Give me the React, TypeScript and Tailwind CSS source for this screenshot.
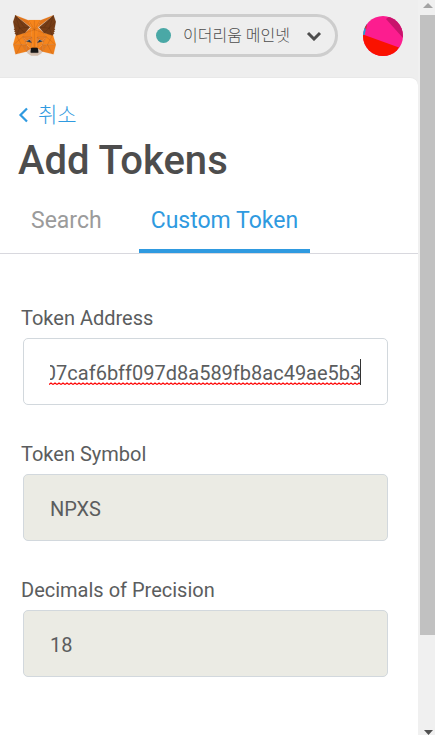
import React, { useEffect, useRef, useState } from "react";

type Facet = [fill: string, points: string];

const FOX_FACETS: Facet[] = [
  ["#e2761b", "274,35 174,109 193,65"],
  ["#e2761b", "44,35 143,110 125,65"],
  ["#ee7f1c", "238,206 205,247 274,264 288,207"],
  ["#ee7f1c", "31,207 45,264 114,247 80,206"],
  ["#f0801c", "103,138 87,162 144,164 142,104"],
  ["#f0801c", "215,138 176,103 174,164 231,162"],
  ["#e4761b", "112,248 140,231 111,208"],
  ["#e4761b", "178,231 206,248 207,208"],
  ["#d7c1b3", "206,247 178,231 181,253 180,262"],
  ["#d7c1b3", "113,247 138,262 138,253 140,231"],
  ["#e67a1a", "112,248 111,207 80,207"],
  ["#e67a1a", "207,207 206,248 238,207"],
  ["#ea7c1e", "231,162 174,164 180,193 188,176 208,185"],
  ["#ea7c1e", "110,185 130,176 139,193 144,164 88,162"],
  ["#e4751f", "88,162 111,208 110,185"],
  ["#e4751f", "208,185 207,208 231,162"],
  ["#e4751f", "144,164 139,193 145,228 147,182"],
  ["#e4751f", "174,164 172,182 173,228 180,193"],
  ["#f6851b", "180,193 173,228 178,231 207,208 208,185"],
  ["#f6851b", "110,185 111,208 140,231 145,228 139,193"],
  ["#f6851b", "270,148 215,138 231,162 207,208 238,207 288,207"],
  ["#f6851b", "103,138 48,148 31,207 80,207 111,208 88,162"],
  ["#f6851b", "174,164 178,107 195,63 123,63 140,107 144,164 145,183 145,228 173,228 173,183"],
  ["#d3bfae", "180,262 181,253 178,251 140,251 138,253 138,262 113,245 118,258 140,272 178,272 201,258 206,245"],
  ["#763d16", "280,114 288,73 274,35 187,105 215,138 267,153 279,140 274,136 282,129 276,124 284,118"],
  ["#763d16", "31,73 39,114 35,118 43,124 37,129 45,136 40,140 51,153 103,138 132,105 44,35"],
  ["#233447", "142,196 110,188 130,178"],
  ["#233447", "177,196 189,178 208,188"],
  ["#161616", "180,229 173,225 145,225 138,229 136,253 140,255 178,255 183,253"],
];

const FoxLogo = () => (
  <svg viewBox="30 33 259 241" preserveAspectRatio="none" className="mt-px h-[41px] w-[43px]" aria-hidden="true">
    {FOX_FACETS.map(([fill, points]) => (
      <polygon key={points} fill={fill} stroke={fill} strokeWidth="1" points={points} />
    ))}
    <g fill="none" stroke="#8a4312" strokeOpacity="0.4" strokeWidth="3">
      <path d="M125 65 159 120 193 65M159 65V225M131 105 159 120 188 105M103 138 159 120 215 138" />
      <path d="M103 138 88 162 111 208 80 207 50 263M88 162 34 207H80L51 153M80 207 112 247M111 208 112 247" />
      <path d="M215 138 231 162 207 208 238 207 268 263M231 162 285 207H238L267 153M238 207 206 247M207 208 206 247" />
      <path d="M88 162 144 164 139 225M231 162 174 164 180 225M110 185 144 164M208 185 174 164" />
    </g>
    <g fill="none" stroke="#4d260c" strokeOpacity="0.6" strokeWidth="3">
      <path d="M44 35 70 110 131 105M32 73 70 110 51 153M70 110 103 138M44 35 100 105" />
      <path d="M274 35 248 110 188 105M287 73 248 110 267 153M248 110 215 138M274 35 218 105" />
    </g>
  </svg>
);

const AccountAvatar = () => (
  <svg viewBox="0 0 40 40" className="size-10" aria-hidden="true">
    <defs>
      <clipPath id="avatar-clip">
        <circle cx="20" cy="20" r="20" />
      </clipPath>
    </defs>
    <g clipPath="url(#avatar-clip)">
      <rect width="40" height="40" fill="#fc1d8f" />
      <path d="M23 3 27 0H40V22Z" fill="#c8146c" />
      <path d="M0 18.500 36 31.500 30 40H0Z" fill="#fa1200" />
      <path d="M0 8H4L1.500 19 0 19Z" fill="#18a5d8" />
      <path d="M2 11 4 8 3 14Z" fill="#fa1200" />
    </g>
  </svg>
);

const Header = () => (
  <header className="bg-[#eeeeee]">
    <div className="flex h-[77px] items-start justify-between pt-[14px] pr-[15px] pl-[13px]">
      <FoxLogo />
      <div className="flex items-center gap-[25px]">
        <button
          type="button"
          className="flex h-[43px] w-[194px] items-center rounded-full border-[3px] border-[#cdcdcd] pr-[13px] pl-[9px] text-[#4d4d4d]"
        >
          <span className="size-[15px] rounded-full bg-[#4aa8a6]" />
          <span className="ml-3 flex-1 text-left text-base font-light whitespace-nowrap">이더리움 메인넷</span>
          <svg viewBox="0 0 16 10" className="h-[10px] w-4" aria-hidden="true">
            <path d="M2 2 8 8 14 2" fill="none" stroke="currentColor" strokeWidth="3" />
          </svg>
        </button>
        <button type="button" aria-label="Account">
          <AccountAvatar />
        </button>
      </div>
    </div>
    <div className="h-2 rounded-tr-lg border-t border-[#e8e8e8] bg-white" />
  </header>
);

const TABS = ["Search", "Custom Token"];

interface TokenFieldProps {
  id: string;
  label: string;
  value: string;
}

const TokenField = ({ id, label, value }: TokenFieldProps) => (
  <div>
    <label htmlFor={id} className="block pl-[21px] text-xl leading-6">
      {label}
    </label>
    <div className="mt-2 mr-[30px] ml-[23px]">
      <input
        id={id}
        type="text"
        disabled
        value={value}
        className="block h-[67px] w-full rounded-[5px] border border-[#d2d8dd] bg-[#ebebe4] px-[26px] pt-0.5 text-xl"
      />
    </div>
  </div>
);

const AddressField = () => {
  const [address, setAddress] = useState("0xa15c7ebe1f07caf6bff097d8a589fb8ac49ae5b3");
  const inputRef = useRef<HTMLInputElement>(null);

  // keep the end of a long address in view
  useEffect(() => {
    if (inputRef.current) inputRef.current.scrollLeft = inputRef.current.scrollWidth;
  }, [address]);

  return (
    <div>
      <label htmlFor="token-address" className="block pl-[21px] text-xl leading-6">
        Token Address
      </label>
      <div className="relative mt-2 mr-[30px] ml-[23px]">
        <input
          id="token-address"
          ref={inputRef}
          type="text"
          value={address}
          spellCheck={false}
          onChange={(e) => setAddress(e.target.value)}
          className="block h-[67px] w-full rounded-[5px] border border-[#d2d8dd] bg-white px-[26px] pt-0.5 text-xl caret-transparent outline-none"
        />
        <svg className="pointer-events-none absolute inset-x-[26px] top-[44px] h-[3px] w-[calc(100%-53px)]" aria-hidden="true">
          <defs>
            <pattern id="squiggle" width="4" height="3" patternUnits="userSpaceOnUse">
              <path d="M0 2.500 2 1 4 2.500" fill="none" stroke="#ff0000" strokeWidth="1.200" />
            </pattern>
          </defs>
          <rect width="100%" height="3" fill="url(#squiggle)" />
        </svg>
        <span className="pointer-events-none absolute top-[21px] right-[27px] h-[26px] w-px bg-[#333333]" />
      </div>
    </div>
  );
};

const Scrollbar = () => (
  <div className="flex w-[17px] shrink-0 flex-col items-end bg-[#f0f0f0]" aria-hidden="true">
    <svg viewBox="0 0 15 15" className="size-[15px]">
      <path d="M3 8H13L8 3Z" fill="#a3a3a3" />
    </svg>
    <div className="w-[15px] flex-[620] bg-[#c1c1c1]" />
    <div className="flex-[95]" />
    <svg viewBox="0 0 15 5" className="h-[5px] w-[15px]">
      <path d="M4 0H13L8.500 5Z" fill="#505050" />
    </svg>
  </div>
);

const App = () => {
  const [activeTab, setActiveTab] = useState("Custom Token");

  return (
    <div className="flex min-h-screen bg-white font-['Roboto','Noto_Sans_CJK_KR',sans-serif] text-[#5b5d5e]">
      <div className="min-w-0 flex-1">
        <Header />
        <main>
          <div className="px-[18px] pt-[15px]">
            <a href="#" className="flex items-center gap-2 text-[21px] leading-[30px] font-light text-[#2f9ae0]">
              <svg viewBox="0 0 12 16" className="h-4 w-3" aria-hidden="true">
                <path d="M9 1.500 2.500 8 9 14.500" fill="none" stroke="currentColor" strokeWidth="2.200" />
              </svg>
              취소
            </a>
            <h1 className="mt-2 text-[40px] leading-[46px] font-medium text-[#4d4d4d]">Add Tokens</h1>
          </div>
          <nav className="mt-[13px] flex gap-[25px] border-b border-[#d8d8de] px-[19px]">
            {TABS.map((tab) => (
              <button
                key={tab}
                type="button"
                onClick={() => setActiveTab(tab)}
                className={`h-[56px] border-b-4 px-3 pb-1 text-[23px] ${
                  activeTab === tab ? "border-[#2f9ae0] text-[#2f9ae0]" : "border-transparent text-[#9b9b9b]"
                }`}
              >
                {tab}
              </button>
            ))}
          </nav>
          <form className="flex flex-col gap-[37px] pt-[52px]">
            <AddressField />
            <TokenField id="token-symbol" label="Token Symbol" value="NPXS" />
            <TokenField id="token-decimals" label="Decimals of Precision" value="18" />
          </form>
        </main>
      </div>
      <Scrollbar />
    </div>
  );
};

export default App;
